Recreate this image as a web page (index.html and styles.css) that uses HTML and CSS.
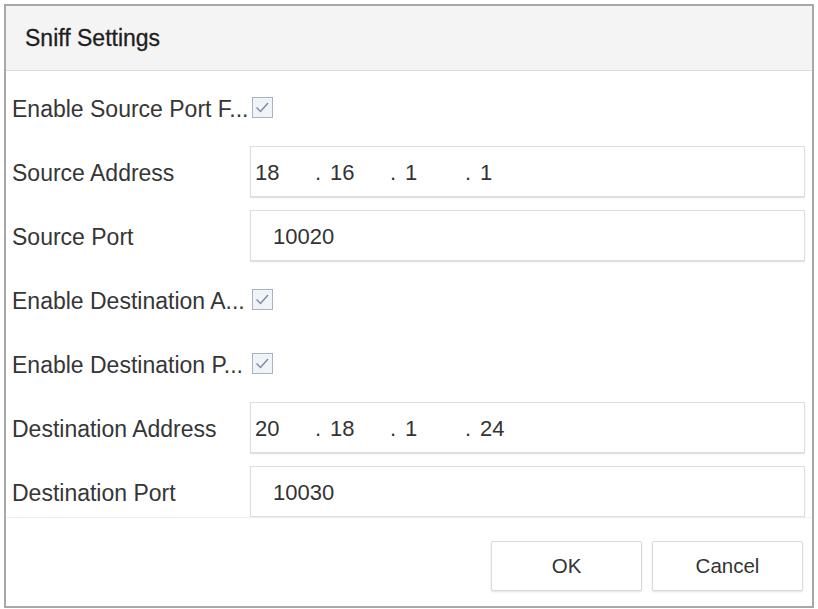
FILE: index.html
```html
<!DOCTYPE html>
<html>
<head>
<meta charset="utf-8">
<link rel="stylesheet" href="styles.css">
</head>
<body>
<div class="dialog">
  <div class="header">Sniff Settings</div>
  <div class="content">
    <div class="row">
      <div class="label">Enable Source Port F...</div>
      <div class="check"><svg viewBox="0 0 21 21" width="21" height="21"><rect x="0.5" y="0.5" width="20" height="20" fill="#f0f4f8" stroke="#a9b2bf"/><path d="M4.5 10.5 L8.5 14.5 L16 6" fill="none" stroke="#7d8ea6" stroke-width="1.5"/></svg></div>
    </div>
    <div class="row">
      <div class="label">Source Address</div>
      <div class="field ip"><span class="seg first">18</span><span class="seg"><span class="dot">.</span>16</span><span class="seg"><span class="dot">.</span>1</span><span class="seg"><span class="dot">.</span>1</span></div>
    </div>
    <div class="row">
      <div class="label">Source Port</div>
      <div class="field port">10020</div>
    </div>
    <div class="row">
      <div class="label">Enable Destination A...</div>
      <div class="check"><svg viewBox="0 0 21 21" width="21" height="21"><rect x="0.5" y="0.5" width="20" height="20" fill="#f0f4f8" stroke="#a9b2bf"/><path d="M4.5 10.5 L8.5 14.5 L16 6" fill="none" stroke="#7d8ea6" stroke-width="1.5"/></svg></div>
    </div>
    <div class="row">
      <div class="label">Enable Destination P...</div>
      <div class="check"><svg viewBox="0 0 21 21" width="21" height="21"><rect x="0.5" y="0.5" width="20" height="20" fill="#f0f4f8" stroke="#a9b2bf"/><path d="M4.5 10.5 L8.5 14.5 L16 6" fill="none" stroke="#7d8ea6" stroke-width="1.5"/></svg></div>
    </div>
    <div class="row">
      <div class="label">Destination Address</div>
      <div class="field ip"><span class="seg first">20</span><span class="seg"><span class="dot">.</span>18</span><span class="seg"><span class="dot">.</span>1</span><span class="seg"><span class="dot">.</span>24</span></div>
    </div>
    <div class="row">
      <div class="label">Destination Port</div>
      <div class="field port">10030</div>
    </div>
  </div>
  <div class="footer">
    <button class="btn">OK</button>
    <button class="btn">Cancel</button>
  </div>
</div>
</body>
</html>
```
FILE: styles.css
```css
* { box-sizing: border-box; }
html, body { margin: 0; padding: 0; background: #ffffff; }
body {
  font-family: "Liberation Sans", Arial, sans-serif;
  color: #333333;
}
.dialog {
  margin: 4px;
  width: 810px;
  height: 604px;
  border: 2px solid #a8a8a8;
  display: flex;
  flex-direction: column;
  background: #ffffff;
}
.header {
  height: 65px;
  background: #f4f4f4;
  border-bottom: 1px solid #dcdcdc;
  padding-left: 19px;
  display: flex;
  align-items: center;
  font-size: 23px;
  color: #1e1e1e;
  -webkit-text-stroke: 0.3px #1e1e1e;
}
.content {
  padding: 11px 7px 0 6px;
  display: flex;
  flex-direction: column;
  gap: 13px;
}
.row {
  height: 51px;
  display: flex;
  align-items: center;
}
.label {
  width: 238px;
  flex: none;
  padding-top: 3px;
  font-size: 23px;
  white-space: nowrap;
  color: #363636;
}
.check {
  margin-left: 2px;
  width: 21px;
  height: 21px;
  display: flex;
}
.field {
  flex: 1;
  height: 51px;
  padding-top: 2px;
  border: 1px solid #dedede;
  box-shadow: 0 1px 1px rgba(0, 0, 0, 0.12);
  display: flex;
  align-items: center;
  font-size: 22px;
  color: #333333;
}
.ip { padding-left: 4px; }
.seg { width: 75px; flex: none; white-space: pre; }
.seg.first { width: 60px; }
.dot { display: inline-block; width: 15px; }
.port { padding-left: 22px; }
.footer {
  margin-top: auto;
  border-top: 1px solid #f0f0f0;
  height: 89px;
  padding: 23px 9px 15px 0;
  display: flex;
  justify-content: flex-end;
  gap: 10px;
}
.btn {
  width: 151px;
  height: 50px;
  background: #ffffff;
  border: 1px solid #dadada;
  border-radius: 2px;
  box-shadow: 0 1px 2px rgba(0, 0, 0, 0.12);
  font-family: "Liberation Sans", Arial, sans-serif;
  font-size: 20.5px;
  color: #333333;
  padding: 0;
}
```
